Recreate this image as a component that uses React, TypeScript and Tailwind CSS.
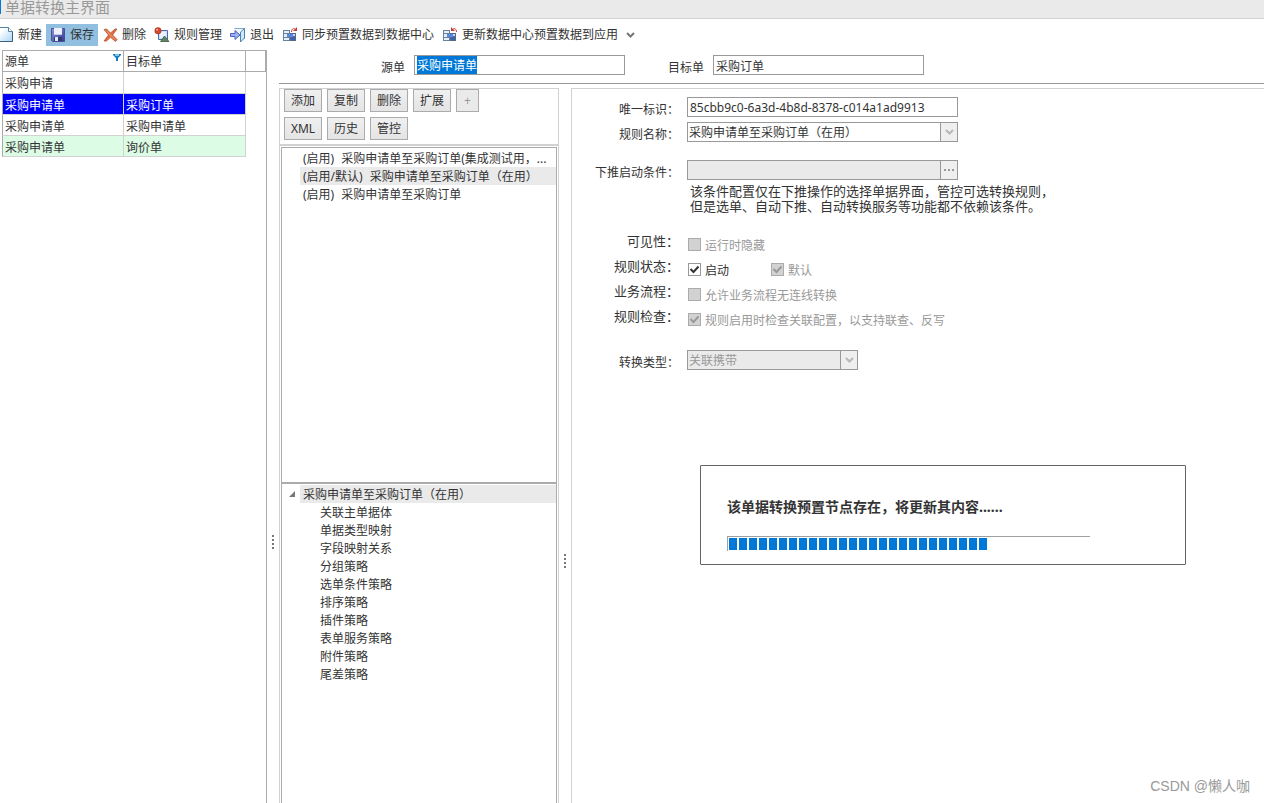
import { useEffect, useRef, useState } from 'react';
import type { ReactNode } from 'react';

type Doc = { source: string; target: string };

const docs: Doc[] = [
  { source: '采购申请', target: '' },
  { source: '采购申请单', target: '采购订单' },
  { source: '采购申请单', target: '采购申请单' },
  { source: '采购申请单', target: '询价单' },
];

const rules = [
  { state: '(启用)', name: '采购申请单至采购订单(集成测试用，...' },
  { state: '(启用/默认)', name: '采购申请单至采购订单（在用）' },
  { state: '(启用)', name: '采购申请单至采购订单' },
];

const nodes = [
  '关联主单据体',
  '单据类型映射',
  '字段映射关系',
  '分组策略',
  '选单条件策略',
  '排序策略',
  '插件策略',
  '表单服务策略',
  '附件策略',
  '尾差策略',
];

/* Toolbar icons */

function NewIcon() {
  return (
    <svg width="16" height="16" viewBox="0 0 16 16" aria-hidden="true">
      <defs>
        <linearGradient id="page" x1="0" y1="0" x2="1" y2="1">
          <stop offset="0.2" stopColor="#ffffff" />
          <stop offset="1" stopColor="#a9d3f7" />
        </linearGradient>
      </defs>
      <path d="M1.500 0.500h9l4 4v10h-13z" fill="url(#page)" stroke="#56809f" />
      <path d="M10.500 0.500v4h4" fill="#fff" stroke="#56809f" />
      <path d="M2 14.500h12.500V5" fill="none" stroke="#3d6280" />
    </svg>
  );
}

function SaveIcon() {
  return (
    <svg width="16" height="16" viewBox="0 0 16 16" aria-hidden="true">
      <defs>
        <linearGradient id="disk" x1="0" y1="0" x2="1" y2="1">
          <stop offset="0" stopColor="#8f95dd" />
          <stop offset="1" stopColor="#33388f" />
        </linearGradient>
      </defs>
      <path d="M1.500 1.500h13v13h-12l-1-1z" fill="url(#disk)" stroke="#4a4ea0" />
      <path d="M4 1h8v7H4z" fill="#eef1fb" />
      <path d="M4 7h8v1H4z" fill="#c3c9ea" />
      <path d="M4 10h8v4H4z" fill="#343873" />
      <path d="M5 10h3v4H5z" fill="#d8f0f5" />
    </svg>
  );
}

function DeleteIcon() {
  return (
    <svg width="16" height="16" viewBox="0 0 16 16" aria-hidden="true">
      <path
        d="M2 2.500 4.500 2 8.500 6 13 2H15L10.500 8 15 12.500 13.500 14.500 8.500 10.200 4.500 14H2L6.500 8z"
        fill="#e0703f"
        stroke="#b5512c"
        strokeWidth="0.8"
        strokeLinejoin="round"
      />
      <path d="M4 3.500l9 9" stroke="#f0a37c" />
    </svg>
  );
}

function RuleIcon() {
  return (
    <svg width="16" height="16" viewBox="0 0 16 16" aria-hidden="true">
      <path d="M4.500 3.500h9v9h-9z" fill="#cfe0fa" stroke="#4b6cb0" />
      <path d="M6 5h6v6H6z" fill="#e9f2ff" />
      <circle cx="4" cy="3.800" r="3.200" fill="#d6452b" stroke="#a8301c" strokeWidth="0.6" />
      <circle cx="3.200" cy="2.800" r="1" fill="#f6b39f" />
      <path d="M10.500 9l4.500 5.500H6.500z" fill="#5d8560" stroke="#3c5c40" strokeWidth="0.8" />
    </svg>
  );
}

function ExitIcon() {
  return (
    <svg width="16" height="16" viewBox="0 0 16 16" aria-hidden="true">
      <path d="M4.500 1.500h10v10h-4" fill="#f2f7ff" stroke="#7fa9d0" />
      <path d="M14.500 1.500v9.500l-4 4V5z" fill="#cfe8f8" stroke="#4d83b0" />
      <path d="M0.500 6.500H5v-3L10 8l-5 4.500v-3H0.500z" fill="#9cb4f0" stroke="#4a62bd" />
    </svg>
  );
}

function SyncIcon({ flip = false }: { flip?: boolean }) {
  return (
    <svg width="16" height="16" viewBox="0 0 16 16" aria-hidden="true">
      <path d="M1 3h7v11H1z" fill="#6b8296" />
      <path d="M2 4h5v2H2zM2 7h5v3H2zM2 11h5v2H2z" fill="#e6f0fa" />
      <path d="M8 6h6v8H8z" fill="#52688c" />
      <path d="M9 7h4v2H9z" fill="#c5dafa" />
      <path d="M9 11h4v2H9z" fill="#3a62b8" />
      <path d="M5 7h6v3H5z" fill="#5a86e6" />
      {flip ? (
        <>
          <path d="M10.500 2.500C12 0.800 14.500 1.500 14.500 5" fill="none" stroke="#c93a3a" />
          <path d="M9 0v4h4z" fill="#c93a3a" />
        </>
      ) : (
        <>
          <path d="M9.500 5C9.500 1.500 12 0.800 13.500 2.500" fill="none" stroke="#c93a3a" />
          <path d="M15 0v4h-4z" fill="#c93a3a" />
        </>
      )}
    </svg>
  );
}

function Chevron({ className }: { className: string }) {
  return (
    <svg width="9" height="8" viewBox="0 0 9 8" className={className} aria-hidden="true">
      <path d="M1 2l3.500 3.500L8 2" fill="none" stroke="currentColor" strokeWidth="2" />
    </svg>
  );
}

function ToolButton({ icon, label, active = false }: { icon: ReactNode; label: string; active?: boolean }) {
  return (
    <button
      type="button"
      className={`flex h-[22px] shrink-0 items-center gap-1 px-1 whitespace-nowrap ${active ? 'bg-[#91bfe0]' : ''}`}
    >
      {icon}
      <span>{label}</span>
    </button>
  );
}

function SmallButton({ label }: { label: string }) {
  return (
    <button
      type="button"
      className="h-[23px] w-[38px] border border-[#ababab] bg-linear-to-b from-[#f0f0f0] to-[#e4e4e4]"
    >
      {label}
    </button>
  );
}

function Grip({ className }: { className: string }) {
  return (
    <div className={`flex w-3 shrink-0 flex-col items-center gap-[2px] ${className}`}>
      {[0, 1, 2, 3].map((i) => (
        <span key={i} className="size-[2px] bg-[#777]" />
      ))}
    </div>
  );
}

type CheckProps = { label: string; checked?: boolean; disabled?: boolean };

function Check({ label, checked = false, disabled = false }: CheckProps) {
  const [on, setOn] = useState(checked);
  return (
    <label className={`flex items-center gap-1 ${disabled ? 'text-[#999]' : ''}`}>
      <span className="grid">
        <input
          type="checkbox"
          checked={on}
          disabled={disabled}
          onChange={(e) => setOn(e.target.checked)}
          className="col-start-1 row-start-1 size-[13px] appearance-none border border-[#999] bg-white disabled:border-[#ababab] disabled:bg-[#d2d2d2]"
        />
        {on && (
          <svg width="13" height="13" viewBox="0 0 13 13" className="pointer-events-none col-start-1 row-start-1">
            <path d="M2.500 6l3 3L10.500 3.500" fill="none" stroke={disabled ? '#999' : '#333'} strokeWidth="2" />
          </svg>
        )}
      </span>
      <span className="pt-[2px]">{label}</span>
    </label>
  );
}

function FieldRow({ label, htmlFor, children }: { label: string; htmlFor: string; children: ReactNode }) {
  return (
    <div className="flex h-5 items-center gap-2">
      <label htmlFor={htmlFor} className="w-[107px] shrink-0 pt-[6px] text-right">
        {label}
      </label>
      {children}
    </div>
  );
}

function CheckRow({ label, children }: { label: string; children: ReactNode }) {
  return (
    <div role="group" aria-label={label} className="flex h-[25px] items-center gap-[9px]">
      <span className="w-[107px] shrink-0 pb-2 text-right text-[13px]">{label}</span>
      {children}
    </div>
  );
}

export default function App() {
  const sourceRef = useRef<HTMLInputElement>(null);
  const [current, setCurrent] = useState(1);
  const [rule, setRule] = useState(1);

  useEffect(() => {
    sourceRef.current?.focus();
    sourceRef.current?.select();
  }, []);

  return (
    <div className="relative flex h-screen flex-col overflow-hidden bg-white font-['Noto_Sans','Noto_Sans_CJK_SC',sans-serif] text-[12px] leading-4 text-[#333]">
      {/* Title bar */}
      <header className="flex h-[19px] shrink-0 items-start border-b border-[#d2d2d2] bg-[#eaeaea]">
        <span className="h-[14px] w-px bg-[#0078d7]" />
        <h1 className="pl-1 text-[15px] leading-[15px] text-[#999]">单据转换主界面</h1>
      </header>

      {/* Toolbar */}
      <div role="toolbar" className="-ml-[6px] flex h-[31px] shrink-0 items-center">
        <ToolButton icon={<NewIcon />} label="新建" />
        <ToolButton icon={<SaveIcon />} label="保存" active />
        <ToolButton icon={<DeleteIcon />} label="删除" />
        <ToolButton icon={<RuleIcon />} label="规则管理" />
        <ToolButton icon={<ExitIcon />} label="退出" />
        <ToolButton icon={<SyncIcon />} label="同步预置数据到数据中心" />
        <ToolButton icon={<SyncIcon flip />} label="更新数据中心预置数据到应用" />
        <button type="button" aria-label="更多" className="px-1">
          <Chevron className="text-[#777]" />
        </button>
      </div>

      <main className="flex min-h-0 flex-1">
        {/* Document pairs */}
        <aside className="w-[267px] shrink-0 border-r border-[#ababab] pl-[2px]">
          <table className="w-full table-fixed border-separate border-spacing-0 text-left">
            <colgroup>
              <col className="w-[122px]" />
              <col className="w-[122px]" />
              <col />
            </colgroup>
            <thead>
              <tr className="h-[22px]">
                <th className="border border-[#ababab] px-[2px] py-0 font-normal">
                  <div className="flex items-start justify-between">
                    <span className="pt-px">源单</span>
                    <svg width="8" height="9" viewBox="0 0 8 9" aria-hidden="true">
                      <path d="M0 1h8v1L5 5v3H3V5L0 2z" fill="#0f7dc4" />
                      <path d="M2 2h4" stroke="#fff" />
                    </svg>
                  </div>
                </th>
                <th className="border-y border-r border-[#ababab] px-[2px] pt-px pb-0 font-normal">目标单</th>
                <th className="border-y border-r border-[#ababab] p-0" />
              </tr>
            </thead>
            <tbody>
              {docs.map((doc, i) => (
                <tr
                  key={i}
                  onClick={() => setCurrent(i)}
                  className={`${i === 0 ? 'h-[22px]' : 'h-[21px]'} ${
                    i === current ? 'bg-[#0000ff] text-white' : i === 3 ? 'bg-[#dcfce6]' : ''
                  }`}
                >
                  <td className="border-r border-b border-l border-r-[#d2d2d2] border-b-[#d2d2d2] border-l-[#ababab] px-[2px] pt-[3px] pb-0">
                    {doc.source}
                  </td>
                  <td className="border-r border-b border-[#d2d2d2] px-[2px] pt-[3px] pb-0">{doc.target}</td>
                  <td className="bg-white p-0" />
                </tr>
              ))}
            </tbody>
          </table>
        </aside>

        <Grip className="pt-[485px]" />

        <div className="flex min-w-0 flex-1 flex-col">
          {/* Source and target */}
          <div className="mb-1 flex h-[34px] shrink-0 items-start border-b border-[#999] pt-[5px] pl-[102px]">
            <label htmlFor="source" className="w-[33px] pt-[5px]">
              源单
            </label>
            <input
              ref={sourceRef}
              id="source"
              defaultValue="采购申请单"
              className="h-5 w-[211px] border border-[#999] px-[2px] leading-4 outline-none selection:bg-[#0078d7] selection:text-white"
            />
            <label htmlFor="target" className="ml-[43px] w-[45px] pt-[5px]">
              目标单
            </label>
            <input
              id="target"
              defaultValue="采购订单"
              className="h-5 w-[211px] border border-[#999] px-[2px] pt-[2px] leading-4 outline-none"
            />
          </div>

          <div className="flex min-h-0 flex-1">
            {/* Rules */}
            <section className="flex w-[280px] shrink-0 flex-col border-x border-t border-[#d2d2d2]">
              <div className="flex flex-col gap-[5px] border-b-2 border-[#d2d2d2] pb-1 pl-1">
                <div className="flex gap-[5px]">
                  <SmallButton label="添加" />
                  <SmallButton label="复制" />
                  <SmallButton label="删除" />
                  <SmallButton label="扩展" />
                  <button type="button" disabled className="h-[23px] w-[23px] border border-[#ababab] bg-[#eaeaea] text-[#999]">
                    +
                  </button>
                </div>
                <div className="flex gap-[5px]">
                  <SmallButton label="XML" />
                  <SmallButton label="历史" />
                  <SmallButton label="管控" />
                </div>
              </div>

              <div className="mx-px mt-px flex min-h-0 flex-1 flex-col border-x border-t border-[#ababab]">
                <ul className="h-[336px] shrink-0 border-b-2 border-[#ababab] pt-px">
                  {rules.map((item, i) => (
                    <li
                      key={i}
                      onClick={() => setRule(i)}
                      className={`ml-[18px] flex h-[18px] gap-[7px] pt-[2px] pl-[3px] whitespace-nowrap ${
                        i === rule ? 'bg-[#eaeaea]' : ''
                      }`}
                    >
                      <span>{item.state}</span>
                      <span>{item.name}</span>
                    </li>
                  ))}
                </ul>

                <ul role="tree" className="pt-px">
                  <li role="treeitem" aria-expanded="true">
                    <div className="flex h-[18px] items-center">
                      <svg width="18" height="8" viewBox="0 0 18 8" aria-hidden="true">
                        <path d="M13 1v6H7z" fill="#777" />
                      </svg>
                      <span className="h-full flex-1 bg-[#eaeaea] pt-[2px] pl-[3px]">采购申请单至采购订单（在用）</span>
                    </div>
                    <ul role="group">
                      {nodes.map((node) => (
                        <li key={node} role="treeitem" className="h-[18px] pt-[2px] pl-[38px]">
                          {node}
                        </li>
                      ))}
                    </ul>
                  </li>
                </ul>
              </div>
            </section>

            <Grip className="pt-[466px]" />

            {/* Rule detail */}
            <section className="relative min-w-0 flex-1 border-t border-l border-[#d2d2d2] pt-2">
              <div className="flex flex-col gap-[5px]">
                <FieldRow label="唯一标识：" htmlFor="uid">
                  <input
                    id="uid"
                    readOnly
                    defaultValue="85cbb9c0-6a3d-4b8d-8378-c014a1ad9913"
                    className="h-5 w-[271px] border border-[#999] px-[2px] outline-none"
                  />
                </FieldRow>
                <FieldRow label="规则名称：" htmlFor="name">
                  <div className="flex h-5 w-[271px] border border-[#999]">
                    <select id="name" className="min-w-0 flex-1 appearance-none px-px pt-[2px] outline-none">
                      <option>采购申请单至采购订单（在用）</option>
                    </select>
                    <span className="grid w-[17px] place-items-center border-l border-[#999] bg-[#efefef]">
                      <Chevron className="text-[#b8b8b8]" />
                    </span>
                  </div>
                </FieldRow>
              </div>

              <div className="mt-[18px]">
                <FieldRow label="下推启动条件：" htmlFor="condition">
                  <div className="flex h-5 w-[271px] border border-[#999]">
                    <input id="condition" readOnly className="min-w-0 flex-1 bg-[#eaeaea] px-[2px] outline-none" />
                    <button
                      type="button"
                      aria-label="编辑条件"
                      className="flex w-[17px] items-center justify-center gap-[2px] border-l border-[#999] bg-[#efefef]"
                    >
                      <span className="size-[2px] bg-[#999]" />
                      <span className="size-[2px] bg-[#999]" />
                      <span className="size-[2px] bg-[#999]" />
                    </button>
                  </div>
                </FieldRow>
                <p className="mt-1 ml-[118px] text-[13px] leading-[15px]">
                  该条件配置仅在下推操作的选择单据界面，管控可选转换规则，
                  <br />
                  但是选单、自动下推、自动转换服务等功能都不依赖该条件。
                </p>
              </div>

              <div className="mt-[18px]">
                <CheckRow label="可见性：">
                  <Check label="运行时隐藏" disabled />
                </CheckRow>
                <CheckRow label="规则状态：">
                  <div className="w-[74px]">
                    <Check label="启动" checked />
                  </div>
                  <Check label="默认" checked disabled />
                </CheckRow>
                <CheckRow label="业务流程：">
                  <Check label="允许业务流程无连线转换" disabled />
                </CheckRow>
                <CheckRow label="规则检查：">
                  <Check label="规则启用时检查关联配置，以支持联查、反写" checked disabled />
                </CheckRow>
              </div>

              <div className="mt-[18px]">
                <FieldRow label="转换类型：" htmlFor="type">
                  <div className="flex h-5 w-[171px] border border-[#999]">
                    <select
                      id="type"
                      disabled
                      className="min-w-0 flex-1 appearance-none bg-[#eaeaea] px-px pt-[2px] text-[#999] opacity-100"
                    >
                      <option>关联携带</option>
                    </select>
                    <span className="grid w-[17px] place-items-center border-l border-[#999] bg-[#efefef]">
                      <Chevron className="text-[#b8b8b8]" />
                    </span>
                  </div>
                </FieldRow>
              </div>

              {/* Progress popup */}
              <div
                role="dialog"
                aria-labelledby="progress-title"
                className="absolute top-[376px] left-32 h-[100px] w-[486px] rounded-[1px] border border-[#646464] bg-white px-[26px] pt-[33px]"
              >
                <p id="progress-title" className="text-[14px] font-bold">
                  该单据转换预置节点存在，将更新其内容......
                </p>
                <div
                  role="progressbar"
                  aria-labelledby="progress-title"
                  className="mt-[21px] flex h-[15px] w-[363px] gap-[2px] border-t border-l border-[#a0a0a0] pt-px pb-px pl-px"
                >
                  {Array.from({ length: 26 }, (_, i) => (
                    <span key={i} className="w-2 bg-[#0078d7]" />
                  ))}
                </div>
              </div>
            </section>
          </div>
        </div>
      </main>

      <div className="absolute right-[14px] bottom-2 font-['Liberation_Sans','Noto_Sans_CJK_SC',sans-serif] text-[14px] leading-[18px] text-[#999]">
        CSDN @懒人咖
      </div>
    </div>
  );
}
